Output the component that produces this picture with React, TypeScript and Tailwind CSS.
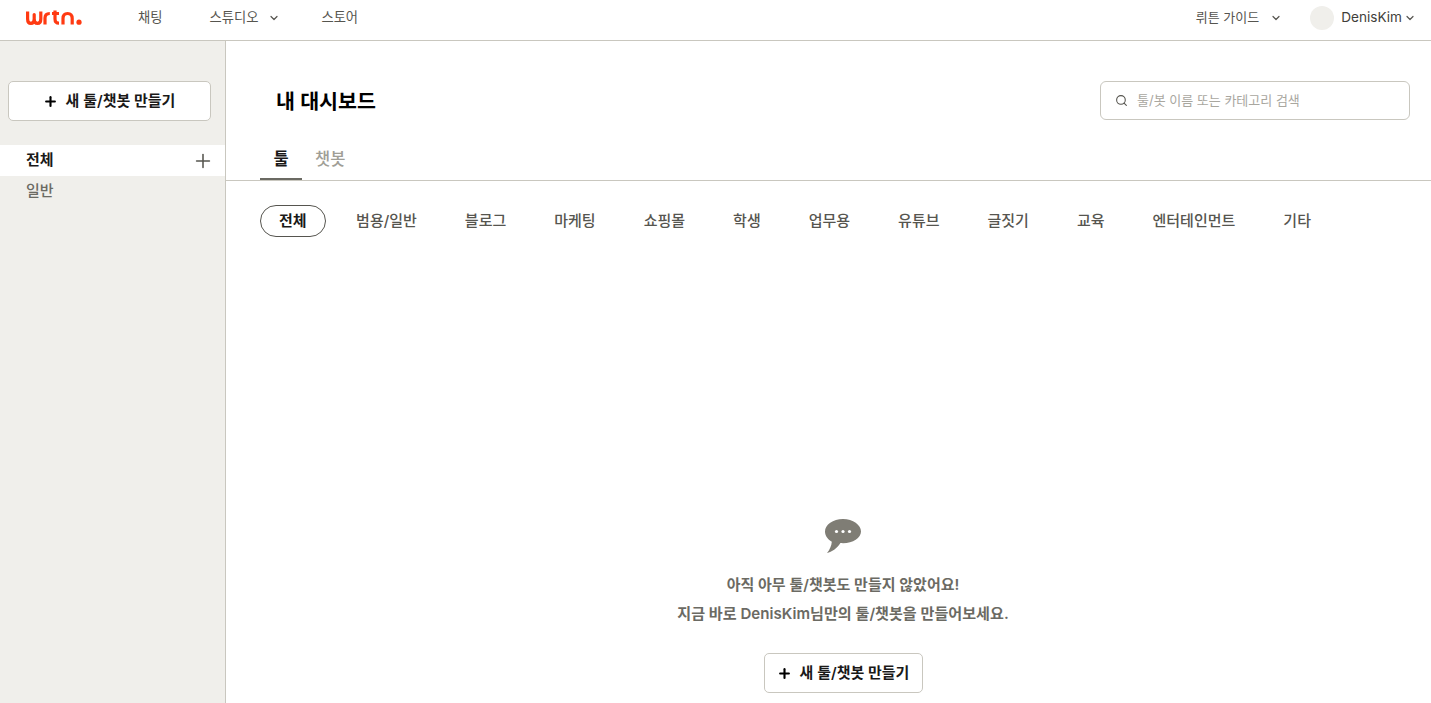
import { ChevronDown, Plus, Search } from 'lucide-react';

const categories = ['전체', '범용/일반', '블로그', '마케팅', '쇼핑몰', '학생', '업무용', '유튜브', '글짓기', '교육', '엔터테인먼트', '기타'];

const WrtnLogo = () => (
  <svg width="57" height="16" viewBox="0 0 57 16" fill="none" stroke="#ff3a12" strokeWidth="3.200" strokeLinejoin="round">
    <path d="M1.600 1.500V9c0 2.800 1.400 4.400 3.300 4.400S8.200 11.800 8.200 9V4.500V9c0 2.800 1.400 4.400 3.300 4.400s3.300-1.600 3.300-4.400V1.500" />
    <path d="M19 14.500V8c0-3 1.400-4.500 4.800-4.500" />
    <path d="M29 .5V9c0 3 1 4.200 4 4.200M26 3.500h7" />
    <path d="M37 14.500V8.500c0-3.400 1.800-5 4.600-5s4.600 1.600 4.600 5v6" />
    <circle cx="53" cy="12.200" r="2.600" fill="#ff3a12" stroke="none" />
  </svg>
);

const ChatBubble = () => (
  <svg width="36" height="34" viewBox="0 0 36 34">
    <path
      d="M18 0C8 0 0 5.600 0 12.500c0 4.200 2.700 8 6.800 10.200-.3 4-2 7.900-4.800 11.300 4.800-1 10-4.200 13.400-9.900.8.100 1.700.1 2.600.1 10 0 18-5.200 18-11.700S28 0 18 0z"
      fill="#7f7d75"
    />
    <circle cx="11.500" cy="12.500" r="1.600" fill="#fff" />
    <circle cx="18" cy="12.500" r="1.600" fill="#fff" />
    <circle cx="24.500" cy="12.500" r="1.600" fill="#fff" />
  </svg>
);

const NewButton = ({ className }: { className: string }) => (
  <button className={`flex items-center justify-center gap-[8px] rounded-[5px] border border-[#c9c7bf] bg-white pr-[1px] text-[15px] font-semibold text-[#1a1918] ${className}`}>
    <Plus className="size-[15px] text-black" strokeWidth={3.4} />
    <span>새 툴/챗봇 만들기</span>
  </button>
);

export default function App() {
  return (
    <div className="flex h-screen flex-col overflow-hidden bg-white font-['Inter','Noto_Sans_CJK_KR',sans-serif]">
      <header className="flex h-[41px] shrink-0 items-center border-b border-[#c9c7bf] pl-[26px] pr-[15px] pb-[5px] text-[13.300px] text-[#56554f]">
        <WrtnLogo />
        <nav className="ml-[55px] flex items-center">
          <span>채팅</span>
          <span className="ml-[47px]">스튜디오</span>
          <ChevronDown className="ml-[10px] size-3" strokeWidth={2.4} />
          <span className="ml-[41px]">스토어</span>
        </nav>
        <div className="ml-auto flex items-center">
          <span className="text-[13px]">뤼튼 가이드</span>
          <ChevronDown className="ml-[11px] size-3" strokeWidth={2.4} />
          <span className="ml-[28px] size-6 rounded-full bg-[#f0efeb]" />
          <span className="ml-[7px] text-[13.600px] text-[#3f3e3a]">DenisKim</span>
          <ChevronDown className="ml-[2px] size-3" strokeWidth={2.4} />
        </div>
      </header>

      <div className="flex min-h-0 flex-1">
        <aside className="w-[226px] shrink-0 border-r border-[#c9c7bf] bg-[#f0efeb] pt-10">
          <NewButton className="ml-2 h-10 w-[203px]" />
          <div className="mt-[24px] flex h-[31px] items-center justify-between bg-white pl-[26px] pr-[11px] text-[15px] font-semibold text-[#1a1918]">
            <span>전체</span>
            <Plus className="size-[22px] text-[#56554f]" strokeWidth={1.7} />
          </div>
          <div className="flex h-[31px] items-center pl-[26px] text-[15px] font-medium text-[#6b6a63]">일반</div>
        </aside>

        <main className="flex min-w-0 flex-1 flex-col">
          <div className="flex items-center justify-between pl-[50px] pr-[21px] pt-10">
            <h1 className="pt-[3px] text-[20.600px] font-semibold text-black">내 대시보드</h1>
            <div className="flex h-[39px] w-[310px] items-center gap-[9px] rounded-[6px] border border-[#c9c7bf] pl-[14px] text-[13px] text-[#a9a79f]">
              <Search className="size-[13px] text-[#56554f]" />
              <span>툴/봇 이름 또는 카테고리 검색</span>
            </div>
          </div>

          <div className="mt-[20px] flex h-[41px] items-start border-b border-[#c9c7bf] pl-[34px]">
            <div className="flex h-10 w-[42px] justify-center border-b-[2px] border-[#6b6a63] pt-[7px] text-[16.500px] font-semibold text-[#1a1918]">툴</div>
            <div className="ml-[13px] pt-[7px] text-[16.500px] font-medium text-[#a09e96]">챗봇</div>
          </div>

          <div className="mt-6 flex items-center gap-[10px] pl-[34px]">
            {categories.map((c, i) => (
              <span
                key={c}
                className={
                  i === 0
                    ? 'mr-[1.500px] flex h-8 items-center rounded-full border border-[#56554f] px-[18px] text-[15px] font-semibold text-[#1a1918]'
                    : 'flex h-8 items-center px-[19px] text-[15px] font-medium text-[#56554f]'
                }
              >
                {c}
              </span>
            ))}
          </div>

          <div className="mt-[282px] flex flex-col items-center pl-[29px]">
            <ChatBubble />
            <p className="mt-[21px] text-[15px] font-semibold leading-[22px] text-[#6b6a63]">아직 아무 툴/챗봇도 만들지 않았어요!</p>
            <p className="mt-[7px] text-[15.100px] font-semibold leading-[22px] text-[#6b6a63]">지금 바로 DenisKim님만의 툴/챗봇을 만들어보세요.</p>
            <NewButton className="ml-[1px] mt-[28px] h-10 w-[159px]" />
          </div>
        </main>
      </div>
    </div>
  );
}
